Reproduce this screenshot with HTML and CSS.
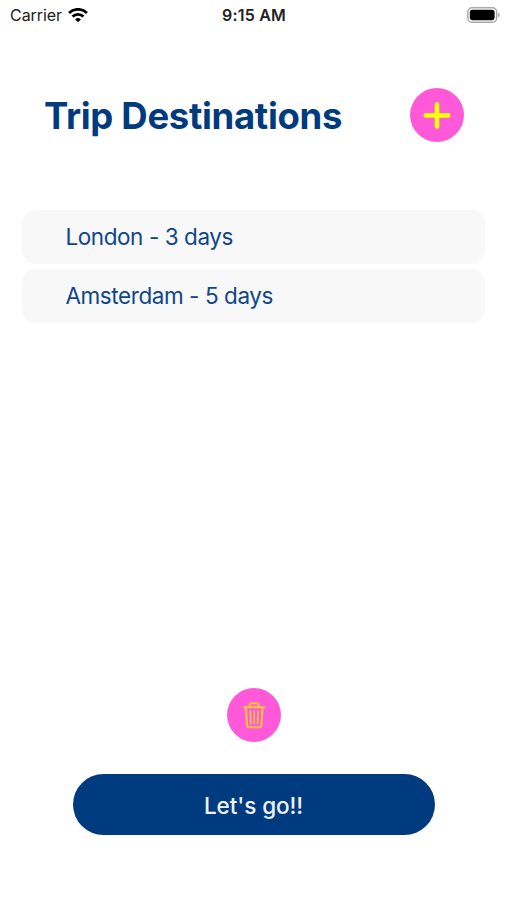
FILE: index.html
```html
<!DOCTYPE html>
<html lang="en">
<head>
<meta charset="utf-8">
<title>Trip Destinations</title>
<link rel="stylesheet" href="styles.css">
</head>
<body>
<div class="screen">
  <div class="status">
    <div class="carrier">
      <span class="carrier-name">Carrier</span>
      <svg class="wifi" width="20" height="15" viewBox="0 0 20 15" fill="none" stroke="#000" stroke-width="2.8">
        <path d="M1.1 5a12.6 12.6 0 0 1 17.8 0"/>
        <path d="M4.5 8.6a7.8 7.8 0 0 1 11 0"/>
        <path d="M10 14.3l-2.9-2.9a4.1 4.1 0 0 1 5.8 0z" fill="#000" stroke="none"/>
      </svg>
    </div>
    <span class="time">9:15 AM</span>
    <svg class="battery" width="33" height="16" viewBox="0 0 33 16">
      <rect x="0.8" y="0.8" width="28.9" height="14.4" rx="4.2" fill="#fff" stroke="#a9a9a9" stroke-width="1.4"/>
      <rect x="2.8" y="2.8" width="24.8" height="10.4" rx="2.4" fill="#000"/>
      <path d="M31.2 5.5q1.6.8 1.6 2.5t-1.6 2.5z" fill="#a9a9a9"/>
    </svg>
  </div>
  <header class="header">
    <h1 class="title">Trip Destinations</h1>
    <button class="round" aria-label="Add destination">
      <svg width="54" height="54" viewBox="0 0 54 54" fill="none" stroke="#ffff0a" stroke-width="4.6" stroke-linecap="round">
        <path d="M27 16.2v22.4M15.8 27.4h22.4"/>
      </svg>
    </button>
  </header>
  <ul class="list">
    <li class="row">London - 3 days</li>
    <li class="row">Amsterdam - 5 days</li>
  </ul>
  <footer class="footer">
    <button class="round" aria-label="Delete">
      <svg width="54" height="54" viewBox="0 0 54 54" fill="none" stroke="#ffc83c" stroke-width="2.1" stroke-linecap="round" stroke-linejoin="round">
        <path d="M17 19.2h20.4M22.8 18.8v-1.6q0-2 2-2h4.8q2 0 2 2v1.6"/>
        <path d="M18.9 19.6l1 17q.2 2.6 2.7 2.6h9.2q2.5 0 2.7-2.6l1-17"/>
        <path d="M23.4 23l.4 12.6M27.2 23v12.6M31 23l-.4 12.6" stroke-width="1.6"/>
      </svg>
    </button>
    <button class="go">Let's go!!</button>
  </footer>
</div>
</body>
</html>
```

FILE: styles.css
```css
* {
  box-sizing: border-box;
}

body {
  margin: 0;
  background: #fff;
  font-family: Inter, "Liberation Sans", sans-serif;
}

.screen {
  display: flex;
  flex-direction: column;
  height: 900px;
}

.status {
  display: grid;
  grid-template-columns: 1fr auto 1fr;
  align-items: center;
  height: 30px;
  padding: 0 7px 0 10px;
  color: #222;
  font-size: 16px;
}

.carrier {
  display: flex;
  align-items: center;
  gap: 6px;
}

.carrier-name {
  letter-spacing: -0.05px;
}

.time {
  margin-right: 2px;
  font-weight: 600;
  letter-spacing: 0.22px;
}

.battery {
  justify-self: end;
}

svg {
  display: block;
}

.header {
  display: flex;
  align-items: center;
  justify-content: space-between;
  height: 54px;
  margin: 58px 43px 0 44px;
}

.title {
  margin: 2px 0 0;
  color: #003b80;
  font-size: 36.5px;
  font-weight: 700;
  letter-spacing: -0.32px;
  line-height: 54px;
  white-space: nowrap;
}

.round {
  width: 54px;
  height: 54px;
  padding: 0;
  border: 0;
  border-radius: 50%;
  background: #ff59d9;
}

.list {
  display: flex;
  flex-direction: column;
  gap: 5px;
  margin: 68px 22px 0;
  padding: 0;
  list-style: none;
}

.row {
  display: flex;
  align-items: center;
  height: 54px;
  padding: 0 0 1px 43.5px;
  border-radius: 14px;
  background: #f8f8f8;
  color: #0f4689;
  font-size: 22.5px;
  letter-spacing: -0.43px;
}

.footer {
  display: flex;
  flex-direction: column;
  align-items: center;
  gap: 32px;
  margin-top: auto;
  padding-bottom: 65px;
}

.go {
  width: 362px;
  height: 61px;
  padding: 2px 0 0;
  border: 0;
  border-radius: 31px;
  background: #003b80;
  color: #eef3fa;
  font: 500 22.5px Inter, "Liberation Sans", sans-serif;
  letter-spacing: -0.08px;
}
```
